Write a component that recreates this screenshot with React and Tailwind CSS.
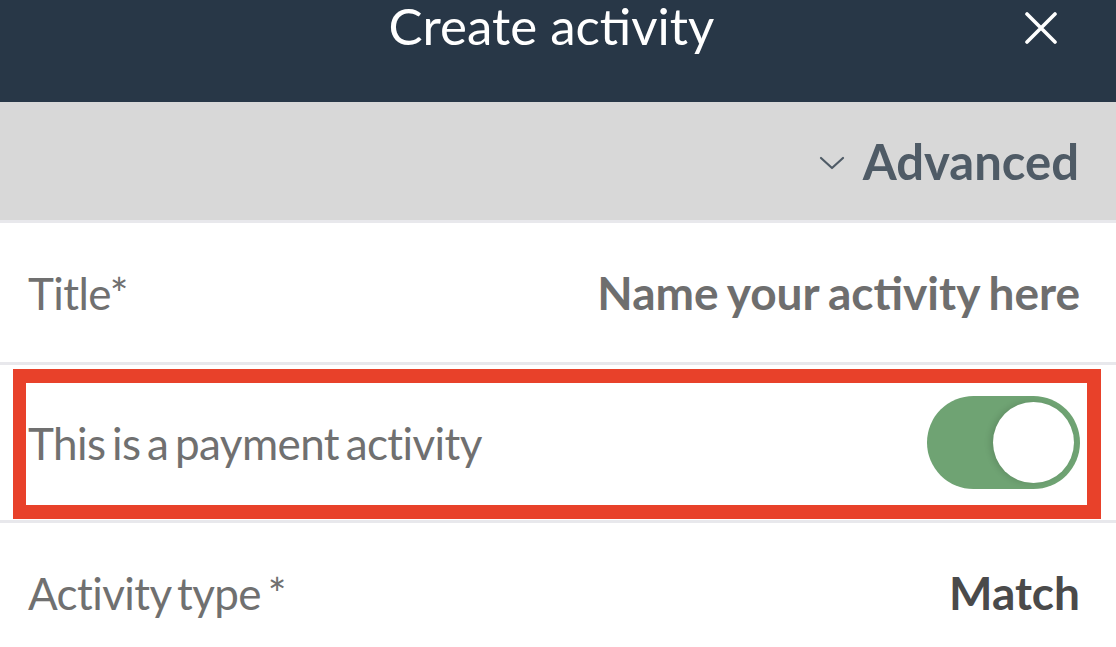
import { useState } from "react";

// Create-activity sheet: header, advanced toggle bar, and form rows.
const Row = ({ children, className = "" }) => (
    <div className={`flex items-center justify-between pl-[28px] pr-[36px] ${className}`}>
        {children}
    </div>
);

const Divider = () => <div className="h-[3px] bg-[#e8e8ec]" />;

const Label = ({ children }) => (
    <span className="text-[44px] text-[#707070] tracking-[-0.6px] [word-spacing:-4px]">{children}</span>
);

const App = () => {
    const [paid, setPaid] = useState(true);

    return (
        <div className="w-[1116px] h-[647px] overflow-hidden bg-white font-['Lato','Noto_Sans',sans-serif]">
            {/* Header */}
            <div className="relative h-[102px] bg-[#283747]">
                <h1 className="absolute left-0 right-[13px] top-[-7px] text-center text-[51px] leading-[66px] text-white font-normal">
                    Create activity
                </h1>
                <button className="absolute left-[1024px] top-[12px] w-[34px] h-[32px] text-white" aria-label="Close">
                    <svg viewBox="0 0 34 32" className="w-full h-full" fill="none" stroke="currentColor" strokeWidth="3.6" strokeLinecap="round">
                        <path d="M3 2 L31 30 M31 2 L3 30" />
                    </svg>
                </button>
            </div>

            {/* Advanced */}
            <div className="h-[118px] bg-[#d8d8d8] flex items-center justify-end pr-[37px]">
                <svg viewBox="0 0 26 14" className="w-[26px] h-[14px] mr-[18px] mt-[4px]" fill="none" stroke="#4f5b66" strokeWidth="2.2" strokeLinecap="round" strokeLinejoin="round">
                    <path d="M2 2 L13 12 L24 2" />
                </svg>
                <span className="text-[49px] font-bold text-[#4f5b66] leading-none">Advanced</span>
            </div>
            <Divider />

            {/* Title */}
            <Row className="h-[139px]">
                <Label>Title*</Label>
                <span className="text-[46px] font-bold text-[#6e6e6e] [word-spacing:-2px]">Name your activity here</span>
            </Row>
            <Divider />

            {/* Payment toggle, highlighted */}
            <div className="relative">
                <Row className="h-[155px]">
                    <Label>This is a payment activity</Label>
                    <button
                        onClick={() => setPaid(!paid)}
                        className={`relative w-[153px] h-[93px] rounded-full ${paid ? "bg-[#6fa373]" : "bg-[#cfcfcf]"}`}
                        aria-label="Payment activity"
                    >
                        <span
                            className={`absolute top-[6px] w-[81px] h-[81px] rounded-full bg-white shadow-[-3px_0_6px_rgba(0,0,0,0.12)] ${paid ? "left-[66px]" : "left-[6px]"}`}
                        />
                    </button>
                </Row>
                <div className="absolute left-[13px] top-[4px] w-[1088px] h-[150px] border-[#e8412a] border-x-[14px] border-y-[14px] border-l-[13px] pointer-events-none" />
            </div>
            <Divider />

            {/* Activity type */}
            <Row className="h-[139px]">
                <Label>Activity type *</Label>
                <span className="text-[46px] font-bold text-[#4a4a4a]">Match</span>
            </Row>
        </div>
    );
};

export default App;
